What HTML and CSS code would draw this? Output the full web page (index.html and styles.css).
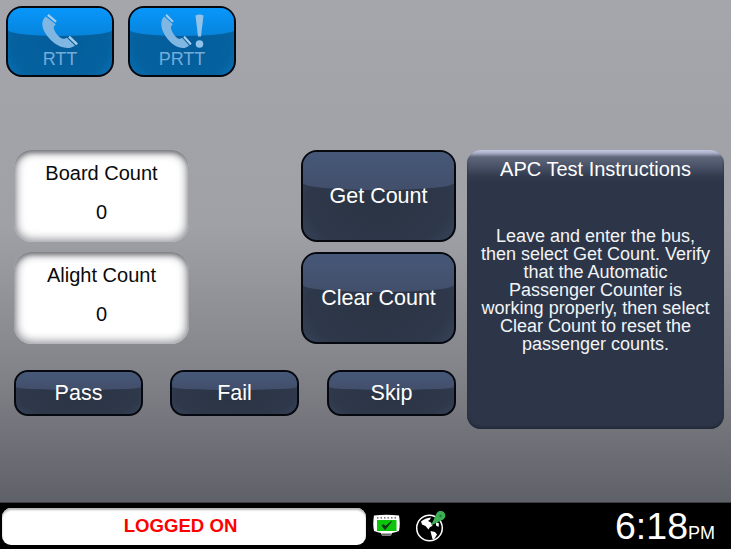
FILE: index.html
```html
<!DOCTYPE html>
<html lang="en">
<head>
<meta charset="utf-8">
<title>APC Test</title>
<link rel="stylesheet" href="styles.css">
</head>
<body>
<div class="screen">
  <main class="main">
    <div class="top-row">
      <button class="call-btn">
        <svg class="call-icon" width="37" height="35" viewBox="0 0 37 35"><use href="#phone" transform="scale(1.08 1.03)"/></svg>
        <span class="call-label">RTT</span>
      </button>
      <button class="call-btn">
        <svg class="call-icon" width="43" height="35" viewBox="0 0 43 35">
          <use href="#phone" transform="scale(.92 1.03)"/>
          <path class="bang" d="M34.500 1.500q4-1.800 8 0l-2.500 21h-3z"/>
          <circle class="bang" cx="38.500" cy="30" r="3.800"/>
        </svg>
        <span class="call-label">PRTT</span>
      </button>
    </div>
    <div class="test-grid">
      <div class="left-col">
        <div class="count-stack">
          <div class="count-box"><span>Board Count</span><span>0</span></div>
          <div class="count-box"><span>Alight Count</span><span>0</span></div>
        </div>
      </div>
      <div class="mid-col">
        <button class="dark-btn big">Get Count</button>
        <button class="dark-btn big">Clear Count</button>
      </div>
      <div class="action-row">
        <button class="dark-btn small">Pass</button>
        <button class="dark-btn small">Fail</button>
        <button class="dark-btn small skip">Skip</button>
      </div>
      <section class="panel">
        <h2 class="panel-title">APC Test Instructions</h2>
        <p class="panel-text">Leave and enter the bus, then select Get Count. Verify that the Automatic Passenger Counter is working properly, then select Clear Count to reset the passenger counts.</p>
      </section>
    </div>
  </main>
  <footer class="footer">
    <div class="status">LOGGED ON</div>
    <svg class="monitor" width="28" height="24" viewBox="0 0 28 24">
      <path d="M1 1.500q12.500-1.500 25 0q1.500 8 0 15.500q-4 1.500-7 2l-1 2.500h-9l-1-2.500q-3-.5-7-2q-1.500-7.500 0-15.500z" fill="#fff"/>
      <rect x="4" y="6" width="19.500" height="11" fill="#0cc40c"/>
      <path d="M9 11.500l3 4 6.500-8-6 4.800-1.500-1.500z" fill="#10321a" stroke="#10321a" stroke-width="1"/>
      <path d="M4 3.800h20" stroke="#555" stroke-width="1.200" stroke-dasharray="1.500 2"/>
      <rect x="9" y="19.500" width="9.500" height="1.500" fill="#666"/>
    </svg>
    <svg class="globe" width="30" height="32" viewBox="0 0 30 32">
      <circle cx="13.500" cy="17" r="12.800" fill="#000" stroke="#fff" stroke-width="1.500"/>
      <path d="M5 10.500q4-3.500 10-4l-1 2-2 1.500 3 1.500 1.500 3.500-2.500 1-1.500 2.500-3-3.500-3.500-1.500z" fill="#fff"/>
      <path d="M14.500 20l4.500 1 2 2.500-3 5-1.500-.5-1.200-4.500z" fill="#fff"/>
      <path d="M20 11l3 1.500-.5 3.500-2.500-1.500z" fill="#fff"/>
      <path d="M15 14.500l5.700-12.500a4.700 4.700 0 1 1 6.500 6.500z" fill="#3cb054"/>
      <circle cx="24.500" cy="5" r="1.200" fill="#1f7a38"/>
    </svg>
    <div class="clock"><span class="time">6:18</span><span class="ampm">PM</span></div>
  </footer>
</div>
<svg class="defs" width="0" height="0">
  <defs>
    <g id="phone">
      <path class="phone-body" d="M3.500 2.500C-.5 6-.8 11.500 3 18.500c4.500 7.800 12.500 14.500 20.500 14.500 3 0 5.500-1 7-2.500l-7.500-7.500c-1.500 1.200-3 1.500-5 .5-3-1.800-6-5.800-7-9-.5-2 .3-3 1.800-4.500z"/>
      <path class="phone-cord" d="M5.500 .8l7.500 6.700M25 22l7.500 7.500"/>
    </g>
  </defs>
</svg>
</body>
</html>
```
FILE: styles.css
```css
* { box-sizing: border-box; }
html, body { margin: 0; padding: 0; }
body { width: 731px; height: 549px; overflow: hidden; font-family: "Liberation Sans", Arial, sans-serif; background: #000; }
button { font-family: inherit; padding: 0; cursor: pointer; }
.defs { position: absolute; }
.screen { width: 731px; height: 549px; display: flex; flex-direction: column; }

.main {
  height: 503px;
  padding: 6px 7px 0 6px;
  background: linear-gradient(180deg, #a5a6ac 0%, #a0a1a7 45%, #85868c 72%, #5f6168 100%);
  border-bottom: 1px solid #3c3d42;
}
.top-row { display: flex; gap: 14px; }
.call-btn {
  position: relative;
  overflow: hidden;
  isolation: isolate;
  width: 108px; height: 71px;
  border: 2px solid #06080f;
  border-radius: 16px;
  background: radial-gradient(75% 95% at 50% 55%, #045c9b 0%, #05629f 62%, #0a7ed4 100%);
  display: flex; flex-direction: column; align-items: center;
}
.call-btn::before {
  content: ""; position: absolute; z-index: -1; left: 0; right: 0; top: 0; height: 28px;
  border-radius: 0 0 50% 50% / 0 0 6px 6px;
  background: linear-gradient(180deg, #0897fb 0%, #0784dc 100%);
}
.call-icon { display: block; margin-top: 6px; flex: none; }
.phone-body { fill: #7fb6e2; }
.phone-cord { stroke: #a6cdec; stroke-width: 2.200; fill: none; }
.bang { fill: #90c2ea; }
.call-label { font-size: 18px; line-height: 20px; margin-top: 0; color: #74acd9; }

.test-grid {
  margin-top: 73px;
  margin-left: 8px;
  display: grid;
  grid-template-columns: 175px 111px 156px 257px;
  grid-template-rows: 194px 45px;
  row-gap: 26px;
  height: 279px;
}
.left-col { grid-column: 1; grid-row: 1; }
.count-stack { display: flex; flex-direction: column; gap: 10px; }
.count-box {
  height: 92px;
  border-radius: 18px;
  background: #fff;
  box-shadow: inset 0 3px 5px -1px #6f7075, inset 0 0 8px 3px #9c9da3;
  display: flex; flex-direction: column; align-items: center;
  padding-top: 12px; gap: 16px;
  font-size: 20px; line-height: 23px; color: #0a0a0a;
}
.mid-col { grid-column: 3; grid-row: 1; display: flex; flex-direction: column; gap: 10px; align-items: flex-end; }
.dark-btn {
  position: relative; overflow: hidden; isolation: isolate;
  border: 2px solid #06080f;
  color: #fff;
  background: radial-gradient(75% 95% at 50% 55%, #2b3444 0%, #2e384a 62%, #3f4d68 100%);
  display: block;
  font-size: 21.500px;
}
.dark-btn::before {
  content: ""; position: absolute; z-index: -1; left: 0; right: 0; top: 0;
  background: linear-gradient(180deg, #465878 0%, #424f6b 100%);
}
.dark-btn.big { height: 92px; width: 155px; border-radius: 16px; }
.dark-btn.big::before { height: 38px; border-radius: 0 0 50% 50% / 0 0 7px 7px; }
.dark-btn.small { height: 46px; width: 129px; border-radius: 14px; }
.dark-btn.small::before { height: 18px; border-radius: 0 0 50% 50% / 0 0 3px 3px; }
.dark-btn.skip { margin-left: 1px; }

.action-row {
  grid-column: 1 / 4; grid-row: 2;
  display: flex; gap: 27px;
  width: 442px;
}
.panel {
  grid-column: 4; grid-row: 1 / 3;
  width: 257px; height: 279px;
  margin-left: 11px;
  border-radius: 14px;
  background: linear-gradient(180deg, #c3c9e2 0, #aab0c8 3px, #5f677b 7px, #4a5367 16px, #333c4f 26px, #2d3648 32px, #2d3648 100%);
  box-shadow: inset 0 -2px 2px #222a38;
  color: #f2f4f7;
  text-align: center;
  padding: 0 13px;
}
.panel-title { margin: 0 -10px; padding-top: 7px; font-size: 20px; font-weight: 400; line-height: 24px; color: #fff; }
.panel-text { margin: 46px 0 0; font-size: 18px; line-height: 18px; }

.footer { height: 46px; background: #000; display: flex; align-items: center; padding: 0 0 0 2px; }
.status {
  width: 364px; height: 37px;
  border-radius: 9px;
  background: #fff;
  box-shadow: inset 0 2px 2px #b5b5b5;
  color: #ff0000;
  font-size: 18.600px; font-weight: 700;
  display: flex; align-items: center; justify-content: center;
  padding-right: 7px;
  margin-right: 7px;
}
.monitor { margin-right: 15px; }
.globe { margin-top: 2px; }
.clock { margin-left: auto; margin-right: 16px; color: #fff; display: flex; align-items: baseline; }
.time { font-size: 37.500px; line-height: 40px; }
.ampm { font-size: 18px; }
```
